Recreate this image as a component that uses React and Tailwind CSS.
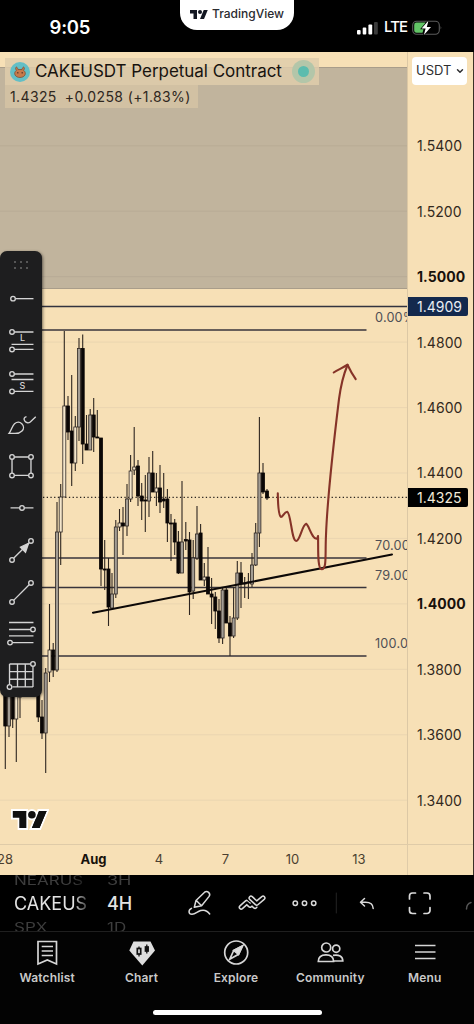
import { ChevronDown } from 'lucide-react'

// x, high, low, body top, body bottom, kind (b = down, g = up, w = small up)
const CANDLES = [
  [5.3, 680, 769, 690, 726, 'b'], [9, 680, 737, 690, 726, 'g'], [12.7, 680, 728, 690, 719, 'b'],
  [16.3, 680, 762, 690, 719, 'w'], [20, 680, 718, 690, 697, 'g'], [38.3, 680, 722, 690, 717, 'b'],
  [42, 700, 739, 717, 733, 'b'], [45.7, 668, 773, 673, 733, 'g'], [49.5, 604, 682, 650, 672, 'w'],
  [53.2, 643, 677, 650, 670, 'b'], [57, 502, 672, 532, 670, 'g'], [60.7, 484, 565, 497, 532, 'w'],
  [64.3, 331, 497, 406, 497, 'w'], [68, 396, 440, 406, 432, 'b'], [71.7, 375, 486, 431, 463, 'b'],
  [75.3, 416, 471, 427, 463, 'w'], [79, 338, 441, 348.5, 427, 'g'], [82.7, 334.5, 464, 348.5, 444, 'b'],
  [86.5, 415, 450, 444, 450, 'b'], [90.2, 409, 450, 415, 450, 'g'], [93.7, 398, 452, 415, 437, 'b'],
  [97.3, 410, 438, 437, 438, 'b'], [101, 438, 586, 438, 569, 'b'], [104.7, 540, 590, 569, 570, 'b'],
  [108.5, 558, 626, 569, 607, 'b'], [112, 573, 608, 594, 608, 'g'], [115.8, 520, 598, 527, 594, 'g'],
  [119.5, 509, 531, 523, 527, 'w'], [123, 507, 555, 523, 526, 'b'], [127, 484, 536, 499, 526, 'g'],
  [130.6, 455, 502, 471, 499, 'w'], [134.2, 427, 475, 467, 470, 'w'], [138, 460, 506, 466, 496, 'b'],
  [141.7, 483, 520, 496, 501, 'b'], [145.3, 475, 532, 500, 501, 'b'], [149, 457, 517, 473, 501, 'g'],
  [152.7, 451, 492, 473, 492, 'b'], [156.4, 473, 506, 488, 492, 'w'], [160, 465, 513, 488, 502, 'b'],
  [163.7, 473, 508, 499, 501, 'b'], [167.4, 489, 542, 499, 523, 'b'], [171, 514, 561, 523, 524, 'b'],
  [174.7, 519, 555, 523, 542, 'b'], [178.4, 531, 574, 542, 573, 'b'], [182, 481, 573, 542, 573, 'g'],
  [185.8, 522, 550, 539.5, 541, 'b'], [189.5, 532, 615, 540, 592, 'b'], [193.2, 540, 599, 558, 591, 'g'],
  [197, 506, 560, 534, 558, 'g'], [200.6, 524, 580, 533, 580, 'b'], [204.3, 563, 586, 577, 580, 'w'],
  [208, 547, 594, 577, 594, 'b'], [211.6, 578, 624, 594, 597, 'b'], [215.3, 592, 629, 597, 611, 'b'],
  [219, 599, 643, 611, 638, 'b'], [222.6, 588, 644, 590, 638, 'g'], [226.3, 588, 623, 590, 623, 'b'],
  [230, 616, 656, 623, 636, 'b'], [233.6, 587, 638, 618, 636, 'g'], [237.3, 561, 620, 573, 618, 'g'],
  [241, 562, 608, 573, 584, 'b'], [244.7, 577, 598, 583, 584, 'b'], [248.4, 573, 599, 582, 583, 'b'],
  [252, 553, 587, 565, 584, 'g'], [255.7, 523, 566, 533, 565, 'g'], [259.4, 417, 547, 473, 533, 'g'],
  [263, 463, 494, 473, 492, 'b'], [267, 489, 500, 491, 498, 'b'],
]

const FILL = { b: '#0b0706', g: '#a39d94', w: '#f4e6cb' }

const GRID = [145.8, 211.2, 276.7, 342.1, 407.6, 473, 538.4, 603.9, 669.3, 734.8, 800.2]

const PRICES = ['1.5400', '1.5200', '1.5000', '1.4800', '1.4600', '1.4400', '1.4200', '1.4000', '1.3800', '1.3600', '1.3400']

const LEVELS = [
  { y: 330, label: '0.00%', ty: 322 },
  { y: 558, label: '70.00%', ty: 550 },
  { y: 587.5, label: '79.00%', ty: 579.5 },
  { y: 656, label: '100.00%', ty: 648 },
]

function TvLogo({ className, outlined }) {
  return (
    <svg viewBox="-2 2 40 22" className={className}>
      <g
        fill={outlined ? '#101010' : '#131722'}
        stroke={outlined ? '#fff' : 'none'}
        strokeWidth="4"
        paintOrder="stroke"
      >
        <path d="M14 22H7V11H0V4h14v18zM28 22h-8l7.5-18h8L28 22z" />
        <circle cx="20" cy="8" r="4" />
        {outlined && <path d="M14 22H7V11H0V4h14v18zM28 22h-8l7.5-18h8L28 22z" stroke="none" />}
      </g>
    </svg>
  )
}

function StatusBar() {
  return (
    <div className="relative flex h-[52px] items-start justify-between bg-black pl-[49.5px] pr-[31px] pt-[14px] text-white">
      <span className="text-[18.5px] font-semibold leading-[27px] tracking-[-0.2px]">9:05</span>
      <div className="absolute left-[180px] top-0 flex h-[30px] w-[114px] items-center rounded-b-[17px] bg-white pb-[2px] pl-[9px]">
        <TvLogo className="h-[11px] w-[20px] shrink-0" />
        <span className="ml-[3px] whitespace-nowrap text-[12px] font-medium text-[#2a2b30]">TradingView</span>
      </div>
      <div className="flex h-[27px] items-center">
        <svg viewBox="0 0 22 14" className="h-[14px] w-[22px]" fill="#fff">
          <rect x="0" y="9" width="3.6" height="4.5" rx="1" />
          <rect x="5.7" y="6.5" width="3.6" height="7" rx="1" />
          <rect x="11.4" y="3.5" width="3.8" height="10" rx="1" />
          <rect x="17" y="1" width="3.8" height="12.5" rx="1" fill="#3b3b3b" />
        </svg>
        <span className="ml-[5px] w-[23px] text-[15px] font-medium tracking-[-0.9px]">LTE</span>
        <svg viewBox="0 0 31 16" className="ml-[5px] h-[16px] w-[31px]">
          <rect x="0.7" y="1.2" width="26.6" height="13" rx="4" fill="none" stroke="#5b5b5b" strokeWidth="1.1" />
          <path d="M4.5 2.6h9l-3 10.2h-6a2.3 2.3 0 0 1-2.3-2.3V4.9a2.3 2.3 0 0 1 2.3-2.3z" fill="#62c466" />
          <path d="M16.5 0.5L9.6 8.6h4l-1.7 6.4L19 7h-4.2z" fill="#fff" stroke="#000" strokeWidth="1.4" paintOrder="stroke" />
          <path d="M28.6 6q1.6 1.7 0 3.5z" fill="#5b5b5b" />
        </svg>
      </div>
    </div>
  )
}

function Chart() {
  return (
    <svg viewBox="0 52 407 792" className="block h-[792px] w-[407px] shrink-0">
      {GRID.map((y) => (
        <path key={y} d={`M0 ${y}H407`} stroke="#ead5b1" />
      ))}
      <rect x="0" y="67" width="407" height="222" fill="#c1b49d" />
      <path d="M0 67.5H407M0 288.5H407" stroke="#a99d8a" />
      <path d="M0 145.8H407M0 211.2H407M0 276.7H407" stroke="#b8ab95" />

      {/* levels */}
      <path d="M0 306.5H407" stroke="#33333f" strokeWidth="1.3" />
      {LEVELS.map((l) => (
        <g key={l.label}>
          <path d={`M0 ${l.y}H366.5`} stroke="#38343b" strokeWidth="1.3" />
          <text x="375" y={l.ty} fontSize="12.7" letterSpacing="0.2" fill="#4e4f55" fontFamily="Inter">{l.label}</text>
        </g>
      ))}
      <path d="M43 497.3H407" stroke="#2b2520" strokeWidth="1.2" strokeDasharray="1.3 2.4" />

      {/* candles */}
      {CANDLES.map(([x, high, low, top, bottom, kind]) => (
        <g key={x}>
          <path d={`M${x} ${high}V${low}`} stroke="#2e2620" strokeWidth="1.1" />
          <rect
            x={x - 1.5}
            y={top}
            width="3"
            height={bottom - top}
            fill={FILL[kind]}
            stroke={kind === 'b' ? '#0b0706' : '#2e2724'}
            strokeWidth="0.8"
          />
        </g>
      ))}

      <path d="M93 612.7L392 554.5" stroke="#0c0807" strokeWidth="2" strokeLinecap="round" />

      {/* hand-drawn projection */}
      <g fill="none" stroke="#863328" strokeWidth="2.1" strokeLinecap="round" strokeLinejoin="round">
        <path d="M277.8 493.3C278 503 278 515 281 517C283 517 284 512 287.2 511.8C291 513 291.5 541 296.2 541C300 541 302 525 306.2 523.8C309 525 312 540 317.2 538.5C318 539 317.5 537 318 536C318.5 545 317 569 321.7 569.2C327 569 325 556 326 535C327.5 495 334 440 339 399C341 384 345 371 347.5 365" />
        <path d="M333.7 372.5C338 369.5 343 368 347.5 364.7C350 370 352 374 355.7 379.2" />
      </g>
    </svg>
  )
}

function Legend() {
  return (
    <div className="absolute left-[5px] top-[6px]">
      <div className="flex h-[27px] w-[314px] items-center bg-[#dfcdac]/85 pl-[5px]">
        <svg viewBox="0 0 20 20" className="size-5 shrink-0">
          <circle cx="10" cy="10" r="10" fill="#63bfc6" />
          <path d="M6.3 8.5C4.5 5 7 3.5 8 7.5h4c1-4 3.5-2.5 1.7 1C17 11 15 15.5 10 15.5S3 11 6.3 8.5z" fill="#c77a4b" stroke="#7d5136" strokeWidth=".8" />
          <path d="M7.8 10v1.5M12.2 10v1.5" stroke="#58362a" strokeWidth="1.2" />
        </svg>
        <span className="ml-[5px] w-[257px] whitespace-nowrap text-[17px] tracking-[-0.03px] text-[#17130f]">
          CAKEUSDT Perpetual Contract
        </span>
        <span className="flex size-[23px] items-center justify-center rounded-full bg-[#b3c6a9]">
          <span className="size-[11px] rounded-full bg-[#5bbcae]" />
        </span>
      </div>
      <div className="flex h-[23px] w-[193px] items-center gap-[8px] whitespace-nowrap bg-[#d2c1a3] pb-px pl-[5px] text-[14px] tracking-[0.38px] text-[#2f271e]">
        <span>1.4325</span>
        <span>+0.0258 (+1.83%)</span>
      </div>
    </div>
  )
}

const TOOLS = [
  {
    id: 'ray',
    lines: 'M15.5 20.7H33.5',
    dots: [[13, 20.7]],
  },
  {
    id: 'long',
    lines: 'M14.5 12H33.5M11.5 24.5H33.5M14.5 29.5H33.5',
    dots: [[12, 12], [12, 29.5]],
    letter: ['L', 21.5],
  },
  {
    id: 'short',
    lines: 'M14.5 12H33.5M11.5 17.5H33.5M14.5 29.5H33.5',
    dots: [[12, 12], [12, 29.5]],
    letter: ['S', 27],
  },
  {
    id: 'brush',
    lines: 'M9 29.5C11.5 26.5 12 22 14.5 19.8C17 17.7 20 18 21.8 19.8C24 22 24 25 22 27C20 29 17.5 29.5 15 29.5ZM26.5 12.7C24 13.2 23.5 15.2 24.7 17C26.2 19.2 28.7 19.3 30.3 18L35.8 12.7',
    dots: [],
  },
  {
    id: 'rect',
    lines: 'M14.5 11H28.5M31 13.5V27M28.5 29.5H14.5M12 27V13.5',
    dots: [[12, 11], [31, 11], [31, 29.5], [12, 29.5]],
  },
  {
    id: 'hline',
    lines: 'M10.5 21H19.5M24.5 21H33.5',
    dots: [[22, 21]],
  },
  {
    id: 'arrow',
    lines: 'M13.8 29L29 14',
    dots: [[12, 31], [31, 12]],
    head: 'M28.5 14.5L20.5 18.3L25.5 23.3Z',
  },
  {
    id: 'trend',
    lines: 'M13.8 29.2L29.2 13.8',
    dots: [[12, 31], [31, 12]],
  },
  {
    id: 'fib',
    lines: 'M9 9.5H33.5M9 16.5H30.5M9 23H33.5M12.5 29.7H33.5',
    dots: [[33, 16.5], [10, 29.7]],
  },
  {
    id: 'grid',
    lines: 'M9.5 9H30.5M33 11.5V32M33 32H12.5M9.5 29.5V9M17.5 9V32M25.3 9V32M9.5 16.7H33M9.5 24.3H33',
    dots: [[33, 9], [9.5, 32]],
  },
]

function DrawingBar() {
  return (
    <div className="absolute left-0 top-[199px] flex h-[446px] w-[42px] flex-col rounded-[7px] bg-[#1e1e1f] shadow-[1px_1px_3px_rgba(0,0,0,0.5)]">
      <div className="flex h-[27px] shrink-0 items-center justify-center">
        <div className="grid grid-cols-3 gap-[4px]">
          {[0, 1, 2, 3, 4, 5].map((i) => (
            <span key={i} className="size-[2px] rounded-full bg-[#6a6a6a]" />
          ))}
        </div>
      </div>
      {TOOLS.map((tool) => (
        <svg key={tool.id} viewBox="0 0 42 42" className="h-[41.9px] w-[42px] shrink-0" fill="none" stroke="#d4d4d4" strokeWidth="1.35">
          <path d={tool.lines} />
          {tool.head && <path d={tool.head} fill="#d4d4d4" />}
          {tool.dots.map(([cx, cy]) => (
            <circle key={`${cx}-${cy}`} cx={cx} cy={cy} r="2.3" fill="#1e1e1f" />
          ))}
          {tool.letter && (
            <text x="22.5" y={tool.letter[1]} textAnchor="middle" fontSize="9" fontWeight="500" fontFamily="Inter" fill="#d4d4d4" stroke="none">{tool.letter[0]}</text>
          )}
        </svg>
      ))}
    </div>
  )
}

function PriceAxis() {
  return (
    <div className="relative h-[792px] w-[66px] shrink-0 border-l border-[#dcc8a5]">
      <div className="ml-[4px] mt-[5px] flex h-[28px] w-[55px] items-center justify-between rounded-[4px] bg-white pl-[4px] pr-[2px] text-[13px] text-[#2e2e30]">
        USDT
        <ChevronDown className="size-[10px]" strokeWidth={3.5} />
      </div>
      <div className="mt-[28px] flex flex-col text-[14px] tracking-[0.05px] text-[#33291d]">
        {PRICES.map((p) => (
          <div
            key={p}
            className={`flex h-[65.44px] items-center pl-[9px] ${p === '1.5000' || p === '1.4000' ? 'font-bold text-[#17110b]' : ''}`}
          >
            {p}
          </div>
        ))}
      </div>
      <div className="absolute left-0 top-[245px] flex h-[19px] w-[60px] items-center rounded-r-[2px] bg-[#14294d] pl-[9px] text-[14px] text-[#e9edf3]">1.4909</div>
      <div className="absolute left-0 top-[436px] flex h-[19px] w-[60px] items-center rounded-r-[2px] bg-black pl-[9px] text-[14px] text-[#f3ead9]">1.4325</div>
    </div>
  )
}

function TimeAxis() {
  return (
    <div className="flex h-[31px] border-t border-[#dfcba8] text-[13px] text-[#4b3f30]">
      <div className="flex w-[408px] items-center overflow-hidden border-r border-[#dfcba8]">
        <span className="-ml-[28px] w-[66px] text-center">28</span>
        <span className="w-[111px] text-center font-bold text-[#17110b]">Aug</span>
        <span className="-ml-[23px] w-[66px] text-center">4</span>
        <span className="w-[67px] text-center">7</span>
        <span className="w-[67px] text-center">10</span>
        <span className="w-[66px] text-center">13</span>
      </div>
    </div>
  )
}

function Toolbar() {
  return (
    <div className="flex h-[57px] overflow-hidden border-b border-[#1f1f1f] bg-black pl-[14px] text-[#e3e3e3]">
      <div className="flex w-[93px] flex-col whitespace-nowrap text-[18px] [mask-image:linear-gradient(to_right,#000_64%,transparent_84%)]">
        <span className="-mt-[4px] h-[18px] scale-y-75 text-[17px] leading-[18px] text-[#3d3d3d]">NEARUS</span>
        <span className="mt-[3px] h-[24px] leading-[24px]">CAKEUS</span>
        <span className="mt-[3px] h-[18px] scale-y-75 text-[17px] leading-[16px] text-[#3d3d3d]">SPX</span>
      </div>
      <div className="flex w-[80px] flex-col text-[18px]">
        <span className="-mt-[4px] h-[18px] scale-y-75 text-[18px] leading-[18px] text-[#3d3d3d]">3H</span>
        <span className="mt-[3px] h-[24px] font-medium leading-[24px]">4H</span>
        <span className="mt-[3px] h-[18px] scale-y-75 text-[17px] leading-[16px] text-[#3d3d3d]">1D</span>
      </div>
      <svg viewBox="187 875 287 56" className="h-[56px] w-[287px] shrink-0" fill="none" stroke="#dadada" strokeWidth="1.5" strokeLinecap="round" strokeLinejoin="round">
        {/* pen */}
        <path d="M194.3 907.3l1.7-6.8 8.6-8.3c2.7-2.2 6.5 1.3 4.5 4.2l-7.5 9.3zM196.3 900.5l5 5" />
        <path d="M209.7 914c-2.500-3.500-5.500-4.500-9-3.500-3.700 1.200-5.200 3.800-8.700 3.800-3.700 0-4-4.300-.5-6" />
        {/* patterns */}
        <path d="M241.2 907.3L246.8 902.3L250 905.3L252 903.8L255 906.5" strokeWidth="5.2" />
        <path d="M241.2 907.3L246.8 902.3L250 905.3L252 903.8L255 906.5" stroke="#000" strokeWidth="2.2" />
        <path d="M250.3 898.3L257 903.3L263 898.3" stroke="#000" strokeWidth="6.5" />
        <path d="M251 898L256.7 903.3L263 898" strokeWidth="5.2" />
        <path d="M251 898L256.7 903.3L263 898" stroke="#000" strokeWidth="2.2" />
        {/* more */}
        <circle cx="295.3" cy="903.3" r="2.2" />
        <circle cx="304.5" cy="903.3" r="2.2" />
        <circle cx="313.7" cy="903.3" r="2.2" />
        <path d="M336.3 893V913" stroke="#242424" strokeWidth="1" />
        {/* undo */}
        <path d="M364.5 898.5l-4 3.8 4 3.7M361 902.3h4.5c4.5 0 7.5 2 7.7 6.2" />
        {/* fullscreen */}
        <path d="M409.5 899v-3a3 3 0 0 1 3-3h3M424 893h3a3 3 0 0 1 3 3v3M430 907.5v3a3 3 0 0 1-3 3h-3M415.5 913.5h-3a3 3 0 0 1-3-3v-3" strokeWidth="1.7" />
        <path d="M466.5 909c0-3.5 1.5-5.5 4.5-6.5" stroke="#555" />
      </svg>
    </div>
  )
}

const NAV = [
  {
    label: 'Watchlist',
    icon: <path d="M5 3.5H23.5V26L14.3 22 5 26zM8.7 8.5H20M8.7 13H20M8.7 17.5H20" />,
  },
  {
    label: 'Chart',
    icon: (
      <>
        <path d="M5.5 3.5h17l4.5 9L14.3 27.5 1.3 12.5z" fill="#dedede" stroke="none" />
        <path d="M11 8.5V18.5M18.8 6.5V15.5" stroke="#111" strokeWidth="1.3" />
        <rect x="9.3" y="10.5" width="3.4" height="5.5" fill="#dedede" stroke="#111" />
        <rect x="17.5" y="9" width="2.6" height="4" fill="#111" stroke="#111" />
      </>
    ),
  },
  {
    label: 'Explore',
    icon: (
      <>
        <circle cx="14.2" cy="14.5" r="11.5" />
        <path d="M20.5 8l-4 8.3-8.8 5 4-8.8z" />
        <path d="M20.5 8l-4 8.3-4.8-3.8z" fill="#dedede" />
      </>
    ),
  },
  {
    label: 'Community',
    icon: (
      <>
        <circle cx="10.2" cy="9.5" r="4.5" />
        <circle cx="20.2" cy="10.7" r="3.6" />
        <path d="M2.3 23.5c0-5 3-6.7 7.7-6.7s7.6 1.7 7.6 6.7zM17 17.3c6-.9 9.8.7 9.8 5.7H18" />
      </>
    ),
  },
  {
    label: 'Menu',
    icon: <path d="M4 7.5H24.5M4 14H24.5M4 20.5H24.5" />,
  },
]

function BottomNav() {
  return (
    <div className="flex h-[92px] flex-col items-center justify-between bg-[#030303] pb-[9px] text-[#c9c9c9]">
      <div className="flex w-full">
        {NAV.map((item) => (
          <div key={item.label} className="flex w-[94.4px] shrink-0 flex-col items-center pt-[6px]">
            <svg viewBox="0 0 28 28" className="size-[28px]" fill="none" stroke="#d6d6d6" strokeWidth="1.7">
              {item.icon}
            </svg>
            <span className="mt-[4px] text-[12px] font-semibold leading-[16px] tracking-[0.15px]">{item.label}</span>
          </div>
        ))}
      </div>
      <div className="h-[5px] w-[169px] rounded-full bg-white" />
    </div>
  )
}

export default function App() {
  return (
    <div className="flex h-[1024px] w-[474px] flex-col overflow-hidden bg-black font-[Inter,sans-serif]">
      <StatusBar />
      <div className="border-r border-[#3a3126] bg-[#f7e0b6]">
        <div className="relative flex">
          <Chart />
          <PriceAxis />
          <Legend />
          <DrawingBar />
          <TvLogo outlined className="absolute left-[11px] top-[757px] h-[21px] w-[38px]" />
        </div>
        <TimeAxis />
      </div>
      <Toolbar />
      <BottomNav />
    </div>
  )
}
